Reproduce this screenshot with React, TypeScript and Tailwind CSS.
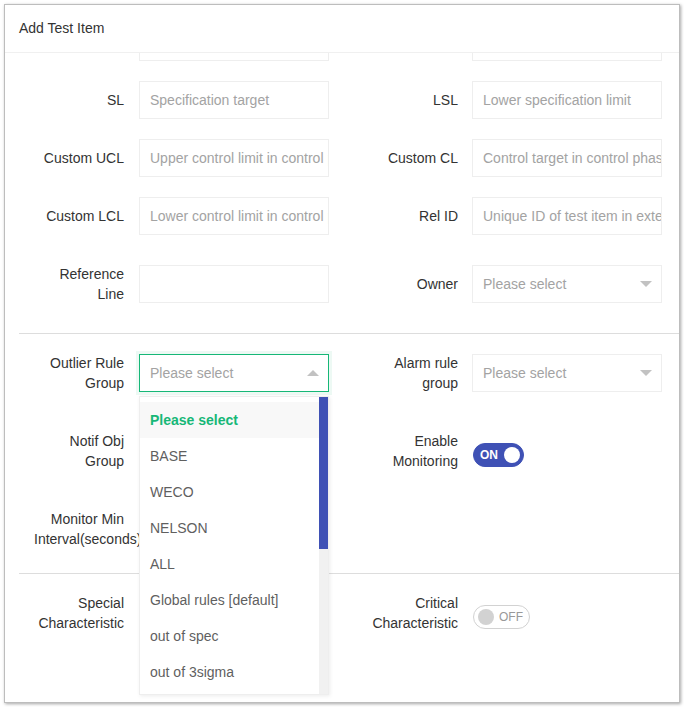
import React from "react";

const FONT = { fontFamily: '"Liberation Sans", Arial, Helvetica, sans-serif' };

function Label({ children, right }: { children: React.ReactNode; right?: boolean }) {
  return (
    <div
      className={
        "w-[120px] shrink-0 py-[9px] pl-[15px] text-right text-[14px] leading-[20px] text-[#333] " +
        (right ? "pr-[14px]" : "pr-[15px]")
      }
    >
      {children}
    </div>
  );
}

function TextInput({ placeholder }: { placeholder?: string }) {
  return (
    <input
      readOnly
      placeholder={placeholder}
      className="h-[38px] w-[190px] shrink-0 border border-[#eeeeee] bg-white pl-[10px] pr-0 text-[14px] text-[#333] outline-none placeholder:text-[#a3a3a3]"
      style={FONT}
    />
  );
}

function Arrow({ up, color = "#c2c2c2" }: { up?: boolean; color?: string }) {
  return (
    <svg width="12" height="6" viewBox="0 0 12 6" className="absolute right-[10px] top-[16px]">
      {up ? <polygon points="0,6 12,6 6,0" fill={color} /> : <polygon points="0,0 12,0 6,6" fill={color} />}
    </svg>
  );
}

function Select({ open, children }: { open?: boolean; children?: React.ReactNode }) {
  return (
    <div className="relative h-[38px] w-[190px] shrink-0">
      <div
        className={
          "flex h-[38px] w-[190px] items-center bg-white pl-[10px] text-[14px] text-[#a3a3a3] " +
          (open
            ? "border border-[#16b777] shadow-[0_0_0_3px_rgba(22,183,119,0.08)]"
            : "border border-[#eeeeee]")
        }
      >
        Please select
      </div>
      <Arrow up={open} />
      {children}
    </div>
  );
}

function Toggle({ on }: { on: boolean }) {
  if (on) {
    return (
      <div className="ml-[1px] mt-[8px] flex h-[24px] w-[51px] items-center rounded-[20px] border border-[#3f51b5] bg-[#3f51b5] pl-[6px] pr-[3px]">
        <span className="text-[12px] font-bold leading-none text-white">ON</span>
        <span className="ml-auto h-[16px] w-[16px] rounded-full bg-white" />
      </div>
    );
  }
  return (
    <div className="ml-[1px] mt-[8px] flex h-[24px] w-[57px] items-center rounded-[20px] border border-[#d2d2d2] bg-white pl-[4px] pr-[6px]">
      <span className="h-[16px] w-[16px] rounded-full bg-[#d2d2d2]" />
      <span className="ml-auto text-[12px] leading-none text-[#999]">OFF</span>
    </div>
  );
}

function Row({
  left,
  right,
  className = "mb-[20px]",
}: {
  left?: React.ReactNode;
  right?: React.ReactNode;
  className?: string;
}) {
  return (
    <div className={"flex " + className}>
      <div className="flex w-[333px] shrink-0 items-center">{left}</div>
      <div className="flex items-center">{right}</div>
    </div>
  );
}

const options = [
  "Please select",
  "BASE",
  "WECO",
  "NELSON",
  "ALL",
  "Global rules [default]",
  "out of spec",
  "out of 3sigma",
];

function Dropdown() {
  return (
    <div className="absolute left-0 top-[42px] z-10 h-[299px] w-[190px] overflow-hidden border border-[#eeeeee] bg-white shadow-[1px_1px_4px_rgba(0,0,0,0.08)]">
      <div className="pr-[9px] pt-[5px]">
        {options.map((o, i) => (
          <div
            key={o}
            className={
              "h-[36px] whitespace-nowrap px-[10px] text-[14px] leading-[36px] " +
              (i === 0 ? "bg-[#f8f8f8] font-bold text-[#16b777]" : "text-[#5f5f5f]")
            }
          >
            {o}
          </div>
        ))}
      </div>
      <div className="absolute bottom-0 right-0 top-0 w-[9px] bg-[#f1f1f1]">
        <div className="h-[152px] w-full bg-[#3f51b5]" />
      </div>
    </div>
  );
}

export default function App() {
  return (
    <div className="h-[707px] w-[684px] bg-white pl-[4px] pt-[4px]" style={FONT}>
      <div className="flex h-[699px] w-[676px] flex-col overflow-hidden border border-[#bdbdbd] bg-white shadow-[1px_1px_3px_rgba(0,0,0,0.35)]">
        <div className="flex h-[48px] shrink-0 items-center border-b border-[#f0f0f0] pl-[14px] text-[14px] text-[#333]">
          Add Test Item
        </div>
        <div className="flex flex-1 flex-col overflow-hidden pl-[14px]">
          <Row
            className="mb-[20px] mt-[-30px]"
            left={
              <>
                <Label>{""}</Label>
                <TextInput />
              </>
            }
            right={
              <>
                <Label right>{""}</Label>
                <TextInput />
              </>
            }
          />
          <Row
            left={
              <>
                <Label>SL</Label>
                <TextInput placeholder="Specification target" />
              </>
            }
            right={
              <>
                <Label right>LSL</Label>
                <TextInput placeholder="Lower specification limit" />
              </>
            }
          />
          <Row
            left={
              <>
                <Label>Custom UCL</Label>
                <TextInput placeholder="Upper control limit in control phase" />
              </>
            }
            right={
              <>
                <Label right>Custom CL</Label>
                <TextInput placeholder="Control target in control phase" />
              </>
            }
          />
          <Row
            left={
              <>
                <Label>Custom LCL</Label>
                <TextInput placeholder="Lower control limit in control phase" />
              </>
            }
            right={
              <>
                <Label right>Rel ID</Label>
                <TextInput placeholder="Unique ID of test item in external system" />
              </>
            }
          />
          <Row
            left={
              <>
                <Label>Reference Line</Label>
                <TextInput />
              </>
            }
            right={
              <>
                <Label right>Owner</Label>
                <Select />
              </>
            }
          />
          <div className="mb-[10px] h-px shrink-0 bg-[#dddddd]" />
          <Row
            className="relative z-10 mb-[20px]"
            left={
              <>
                <Label>Outlier Rule Group</Label>
                <Select open>
                  <Dropdown />
                </Select>
              </>
            }
            right={
              <>
                <Label right>Alarm rule group</Label>
                <Select />
              </>
            }
          />
          <Row
            left={
              <>
                <Label>Notif Obj Group</Label>
              </>
            }
            right={
              <>
                <Label right>Enable Monitoring</Label>
                <Toggle on />
              </>
            }
          />
          <Row
            className="mb-[15px]"
            left={
              <>
                <Label>Monitor Min Interval(seconds)</Label>
              </>
            }
          />
          <div className="mb-[10px] h-px shrink-0 bg-[#dddddd]" />
          <Row
            left={
              <>
                <Label>Special Characteristic</Label>
              </>
            }
            right={
              <>
                <Label right>Critical Characteristic</Label>
                <Toggle on={false} />
              </>
            }
          />
        </div>
      </div>
    </div>
  );
}
